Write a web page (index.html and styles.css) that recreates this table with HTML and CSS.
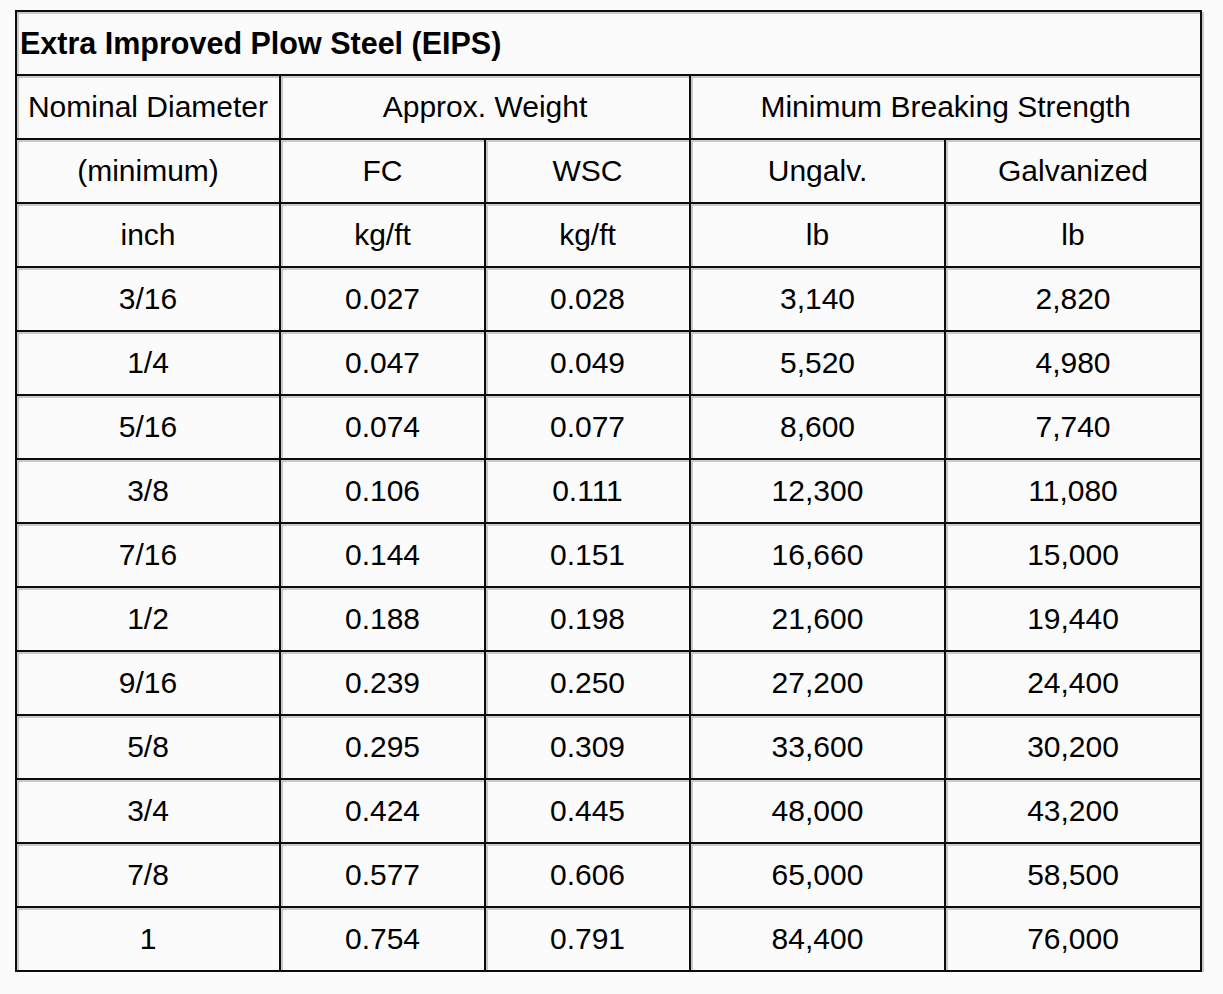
FILE: index.html
```html
<!DOCTYPE html>
<html>
<head>
<meta charset="utf-8">
<link rel="stylesheet" href="styles.css">
</head>
<body>
<table class="eips">
  <colgroup>
    <col class="c1"><col class="c2"><col class="c3"><col class="c4"><col class="c5">
  </colgroup>
  <tr><td class="title" colspan="5">Extra Improved Plow Steel (EIPS)</td></tr>
  <tr><td>Nominal Diameter</td><td colspan="2">Approx. Weight</td><td colspan="2">Minimum Breaking Strength</td></tr>
  <tr><td>(minimum)</td><td>FC</td><td>WSC</td><td>Ungalv.</td><td>Galvanized</td></tr>
  <tr><td>inch</td><td>kg/ft</td><td>kg/ft</td><td>lb</td><td>lb</td></tr>
  <tr><td>3/16</td><td>0.027</td><td>0.028</td><td>3,140</td><td>2,820</td></tr>
  <tr><td>1/4</td><td>0.047</td><td>0.049</td><td>5,520</td><td>4,980</td></tr>
  <tr><td>5/16</td><td>0.074</td><td>0.077</td><td>8,600</td><td>7,740</td></tr>
  <tr><td>3/8</td><td>0.106</td><td>0.111</td><td>12,300</td><td>11,080</td></tr>
  <tr><td>7/16</td><td>0.144</td><td>0.151</td><td>16,660</td><td>15,000</td></tr>
  <tr><td>1/2</td><td>0.188</td><td>0.198</td><td>21,600</td><td>19,440</td></tr>
  <tr><td>9/16</td><td>0.239</td><td>0.250</td><td>27,200</td><td>24,400</td></tr>
  <tr><td>5/8</td><td>0.295</td><td>0.309</td><td>33,600</td><td>30,200</td></tr>
  <tr><td>3/4</td><td>0.424</td><td>0.445</td><td>48,000</td><td>43,200</td></tr>
  <tr><td>7/8</td><td>0.577</td><td>0.606</td><td>65,000</td><td>58,500</td></tr>
  <tr><td>1</td><td>0.754</td><td>0.791</td><td>84,400</td><td>76,000</td></tr>
</table>
</body>
</html>
```
FILE: styles.css
```css
html, body {
  margin: 0;
  padding: 0;
  background: #fbfbfb;
}
body {
  padding: 10px 0 0 15px;
  font-family: "Liberation Sans", Arial, sans-serif;
  color: #000;
}
.eips {
  border-collapse: separate;
  border-spacing: 0;
  table-layout: fixed;
  width: 1187px;
  border-left: 2px solid #0d0d0d;
  border-top: 2px solid #0d0d0d;
  box-shadow: 2px 2px 0 #c8c8c8;
  font-size: 30px;
}
.c1 { width: 264px; }
.c2 { width: 205px; }
.c3 { width: 205px; }
.c4 { width: 255px; }
.c5 { width: 256px; }
.eips td {
  box-sizing: border-box;
  height: 64px;
  padding: 0;
  text-align: center;
  vertical-align: middle;
  white-space: nowrap;
  border-right: 2px solid #0d0d0d;
  border-bottom: 2px solid #0d0d0d;
  background:
    linear-gradient(#c8c8c8, #c8c8c8) left top / 100% 2px no-repeat,
    linear-gradient(#c8c8c8, #c8c8c8) left top / 2px 100% no-repeat;
}
.eips td.title {
  text-align: left;
  font-weight: bold;
  font-size: 30.5px;
  padding-left: 3px;
}
```
